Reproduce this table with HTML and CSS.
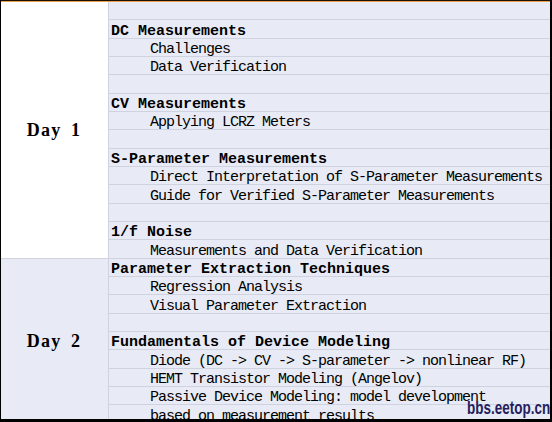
FILE: index.html
```html
<!DOCTYPE html>
<html>
<head>
<meta charset="utf-8">
<link rel="stylesheet" href="styles.css">
</head>
<body>
<div class="frame">
  <div class="sheet">
    <div class="day day1">Day 1</div>
    <div class="day day2">Day 2</div>
    <div class="r"></div>
    <div class="r h">DC Measurements</div>
    <div class="r s">Challenges</div>
    <div class="r s">Data Verification</div>
    <div class="r"></div>
    <div class="r h">CV Measurements</div>
    <div class="r s">Applying LCRZ Meters</div>
    <div class="r"></div>
    <div class="r h">S-Parameter Measurements</div>
    <div class="r s">Direct Interpretation of S-Parameter Measurements</div>
    <div class="r s">Guide for Verified S-Parameter Measurements</div>
    <div class="r"></div>
    <div class="r h">1/f Noise</div>
    <div class="r s">Measurements and Data Verification</div>
    <div class="r h">Parameter Extraction Techniques</div>
    <div class="r s">Regression Analysis</div>
    <div class="r s">Visual Parameter Extraction</div>
    <div class="r"></div>
    <div class="r h">Fundamentals of Device Modeling</div>
    <div class="r s">Diode (DC -&gt; CV -&gt; S-parameter -&gt; nonlinear RF)</div>
    <div class="r s">HEMT Transistor Modeling (Angelov)</div>
    <div class="r s">Passive Device Modeling: model development</div>
    <div class="r s">based on measurement results</div>
  </div>
  <div class="mark">bbs.eetop.cn</div>
</div>
</body>
</html>
```

FILE: styles.css
```css
html, body {
  margin: 0;
  padding: 0;
  background: #ffffff;
}

.frame {
  position: relative;
  width: 552px;
  height: 422px;
  box-sizing: border-box;
  border-top: 1px solid #1a1008;
  border-left: 1px solid #000000;
  border-right: 2px solid #000000;
  border-bottom: 3px solid #000000;
  overflow: hidden;
}

.sheet {
  border-top: 1px solid #e9a24a;
  display: grid;
  grid-template-columns: 108px 441px;
  grid-auto-rows: 18.333px;
  background: #e8ebf5;
}

.day {
  grid-column: 1;
  box-sizing: border-box;
  border-right: 1px solid #cfd3e0;
  border-bottom: 1px solid #cfd3e0;
  display: flex;
  align-items: center;
  justify-content: center;
  font-family: "Liberation Serif", serif;
  font-weight: bold;
  font-size: 18px;
  letter-spacing: 1.2px;
  word-spacing: 4px;
  white-space: pre;
  color: #000;
  padding-top: 1px;
  padding-right: 1px;
}

.day1 {
  grid-row: 1 / span 14;
  background: #ffffff;
}

.day2 {
  grid-row: 15 / span 9;
  background: #e8ebf5;
}

.r {
  grid-column: 2;
  box-sizing: border-box;
  border-bottom: 1px solid #cfd3e0;
  display: flex;
  align-items: flex-end;
  font-family: "Liberation Mono", monospace;
  font-size: 15px;
  line-height: 12px;
  color: #000;
  white-space: pre;
}

.h {
  font-weight: bold;
  padding-left: 2px;
}

.s {
  letter-spacing: -1px;
  padding-left: 41px;
}

.mark {
  position: absolute;
  right: 0;
  bottom: 2px;
  font-family: "Liberation Sans", sans-serif;
  font-weight: bold;
  font-size: 19px;
  line-height: 19px;
  color: #261d5e;
  transform: scaleX(0.71);
  transform-origin: right bottom;
  white-space: nowrap;
}
```
